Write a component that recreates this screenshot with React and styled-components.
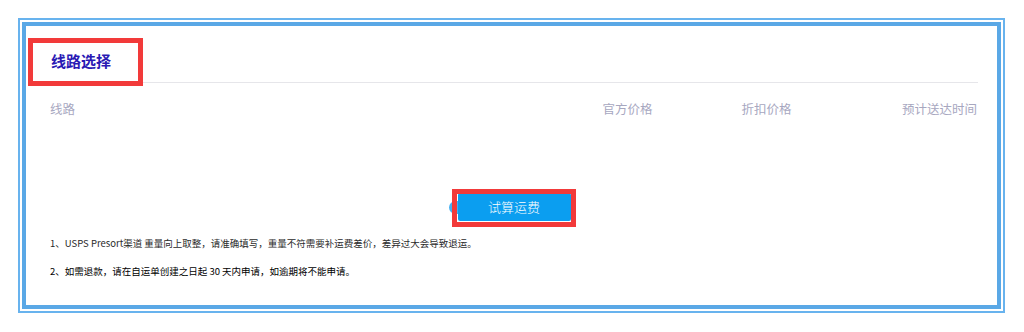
import React from "react";
import styled, { createGlobalStyle } from "styled-components";

const GlobalStyle = createGlobalStyle`
  html, body {
    margin: 0;
    padding: 0;
    background: #ffffff;
  }
  body {
    font-family: "Noto Sans CJK SC", "Noto Sans", sans-serif;
  }
  * { box-sizing: border-box; }
`;

const Page = styled.div`
  width: 1024px;
  height: 332px;
  padding: 18px 19px 0 18px;
`;

const OuterFrame = styled.div`
  width: 987px;
  height: 295px;
  border: 2px solid #68b3ee;
  padding: 2px;
  background: #ffffff;
`;

const Card = styled.section`
  position: relative;
  isolation: isolate;
  height: 100%;
  border: 4px solid #5aa8e6;
  background: #ffffff;
  padding: 0 19px 0 24px;
`;

const Title = styled.h2`
  margin: 0 0 11px 1px;
  padding-top: 25px;
  font-size: 15px;
  line-height: 20px;
  font-weight: 700;
  color: #2a1ab4;
`;

const Divider = styled.div`
  height: 1px;
  margin-left: -22px;
  background: #e6e6ea;
`;

const HeaderRow = styled.div`
  display: grid;
  grid-template-columns: 508px 139px 139px 141px;
  padding-top: 17px;
  font-size: 12.5px;
  line-height: 18px;
  color: #a7a7bf;
`;

const HeaderCell = styled.div`
  text-align: ${(p) => p.$align || "left"};
  white-space: nowrap;
`;

const ButtonRow = styled.div`
  display: flex;
  justify-content: center;
  margin-top: 75px;
`;

const CalcButton = styled.button`
  position: relative;
  width: 113px;
  height: 28px;
  border: none;
  border-radius: 2px;
  background: #0b9ef0;
  color: #ffffff;
  font-family: "Noto Sans CJK SC", "Noto Sans", sans-serif;
  font-size: 13px;
  font-weight: 300;
  line-height: 28px;
  padding: 0;
  cursor: pointer;

  &::before {
    content: "";
    position: absolute;
    left: -9px;
    top: 8px;
    width: 24px;
    height: 13px;
    border-radius: 7px;
    background: #45b0f2;
    z-index: -1;
  }
`;

const Notes = styled.div`
  margin-top: 14px;
  display: flex;
  flex-direction: column;
  gap: 12px;
`;

const Note = styled.p`
  margin: 0;
  font-size: 9.5px;
  line-height: 16px;
  white-space: nowrap;
  color: ${(p) => (p.$strong ? "#000000" : "#2a2a2a")};
`;

const Annotation = styled.div`
  position: absolute;
  top: ${(p) => p.$top}px;
  left: ${(p) => p.$left}px;
  width: ${(p) => p.$width}px;
  height: ${(p) => p.$height}px;
  border: 5px solid #f23a3a;
  pointer-events: none;
`;

export default function App() {
  return (
    <>
      <GlobalStyle />
      <Page>
        <OuterFrame>
          <Card>
            <Title>线路选择</Title>
            <Divider />
            <HeaderRow>
              <HeaderCell>线路</HeaderCell>
              <HeaderCell $align="center">官方价格</HeaderCell>
              <HeaderCell $align="center">折扣价格</HeaderCell>
              <HeaderCell $align="right">预计送达时间</HeaderCell>
            </HeaderRow>
            <ButtonRow>
              <CalcButton type="button">试算运费</CalcButton>
            </ButtonRow>
            <Notes>
              <Note>1、USPS Presort渠道 重量向上取整，请准确填写，重量不符需要补运费差价，差异过大会导致退运。</Note>
              <Note $strong>2、如需退款，请在自运单创建之日起 30 天内申请，如逾期将不能申请。</Note>
            </Notes>
            <Annotation $top={12} $left={2} $width={115} $height={48} />
            <Annotation $top={163} $left={426} $width={124} $height={38} />
          </Card>
        </OuterFrame>
      </Page>
    </>
  );
}
